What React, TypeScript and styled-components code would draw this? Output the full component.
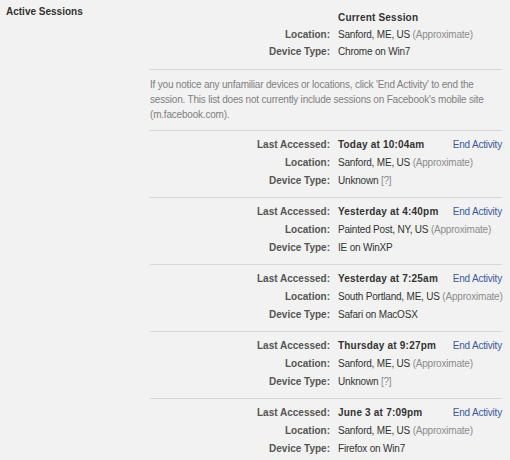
import styled, { createGlobalStyle } from "styled-components";

const GlobalStyle = createGlobalStyle`
  html, body {
    margin: 0;
    padding: 0;
    background: #f2f2f2;
  }
  body {
    font-family: "Liberation Sans", Arial, sans-serif;
    font-size: 10px;
    letter-spacing: -0.2px;
    color: #333;
  }
`;

interface Session {
  accessed: string;
  location: string;
  approximate: boolean;
  device: string;
  unknown?: boolean;
}

const sessions: Session[] = [
  { accessed: "Today at 10:04am", location: "Sanford, ME, US", approximate: true, device: "Unknown", unknown: true },
  { accessed: "Yesterday at 4:40pm", location: "Painted Post, NY, US", approximate: true, device: "IE on WinXP" },
  { accessed: "Yesterday at 7:25am", location: "South Portland, ME, US", approximate: true, device: "Safari on MacOSX" },
  { accessed: "Thursday at 9:27pm", location: "Sanford, ME, US", approximate: true, device: "Unknown", unknown: true },
  { accessed: "June 3 at 7:09pm", location: "Sanford, ME, US", approximate: true, device: "Firefox on Win7" },
];

export default function App() {
  return (
    <>
      <GlobalStyle />
      <Page>
        <Heading>Active Sessions</Heading>
        <Content>
          <Block $top={9} $bottom={9}>
            <Grid $row={17}>
              <Label />
              <Strong>Current Session</Strong>
              <Cell />
              <Label>Location:</Label>
              <Value>
                Sanford, ME, US <Muted>(Approximate)</Muted>
              </Value>
              <Cell />
              <Label>Device Type:</Label>
              <Value>Chrome on Win7</Value>
              <Cell />
            </Grid>
          </Block>
          <Note>
            If you notice any unfamiliar devices or locations, click 'End Activity' to end the
            session. This list does not currently include sessions on Facebook's mobile site
            (m.facebook.com).
          </Note>
          {sessions.map((s, i) => (
            <Block key={i} $top={4} $bottom={8} $divided>
              <Grid $row={18}>
                <Label>Last Accessed:</Label>
                <Strong>{s.accessed}</Strong>
                <Link href="#">End Activity</Link>
                <Label>Location:</Label>
                <Value>
                  {s.location} {s.approximate && <Muted>(Approximate)</Muted>}
                </Value>
                <Cell />
                <Label>Device Type:</Label>
                <Value>
                  {s.device} {s.unknown && <Muted>[?]</Muted>}
                </Value>
                <Cell />
              </Grid>
            </Block>
          ))}
        </Content>
      </Page>
    </>
  );
}

const Page = styled.div`
  display: grid;
  grid-template-columns: 150px 352px;
  width: 510px;
  height: 460px;
  overflow: hidden;
`;

const Heading = styled.div`
  font-weight: bold;
  letter-spacing: 0;
  color: #333;
  padding: 5px 0 0 6px;
  line-height: 14px;
`;

const Content = styled.div`
  display: flex;
  flex-direction: column;
`;

const Block = styled.div<{ $top: number; $bottom: number; $divided?: boolean }>`
  padding: ${(p) => p.$top}px 0 ${(p) => p.$bottom}px;
  border-top: ${(p) => (p.$divided ? "1px solid #d6d9d2" : "none")};
`;

const Grid = styled.div<{ $row: number }>`
  display: grid;
  grid-template-columns: 180px minmax(0, 1fr) auto;
  grid-auto-rows: ${(p) => p.$row}px;
  align-items: center;
  column-gap: 8px;
`;

const Cell = styled.span``;

const Label = styled.span`
  text-align: right;
  font-weight: bold;
  letter-spacing: 0;
  color: #555;
  white-space: nowrap;
`;

const Value = styled.span`
  color: #333;
  white-space: nowrap;
`;

const Strong = styled(Value)`
  font-weight: bold;
  letter-spacing: 0.2px;
`;

const Muted = styled.span`
  color: #8c8c8c;
`;

const Link = styled.a`
  color: #3b5998;
  text-decoration: none;
  white-space: nowrap;
  text-align: right;
`;

const Note = styled.p`
  margin: 0;
  border-top: 1px solid #d6d9d2;
  padding: 7px 0 8px;
  line-height: 15px;
  color: #808080;
`;
